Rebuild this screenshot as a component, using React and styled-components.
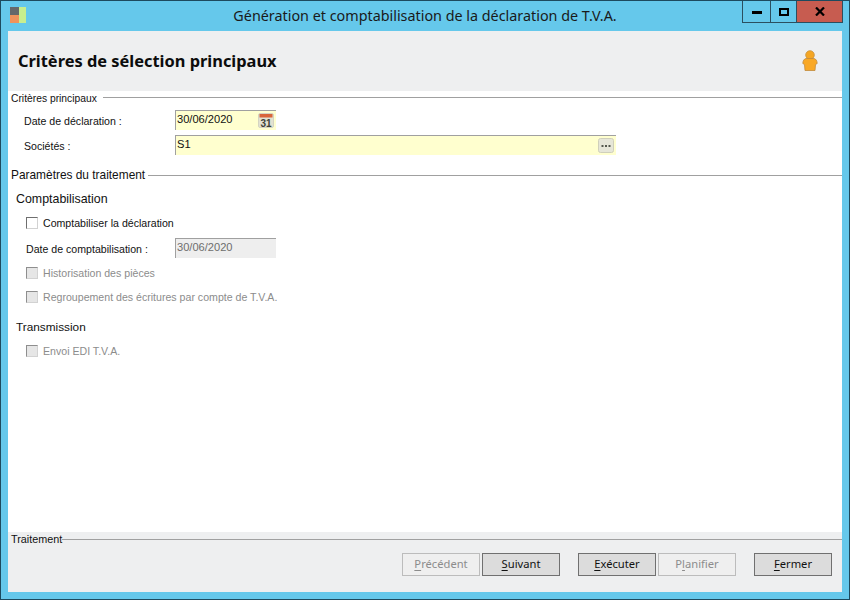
import React from 'react';
import styled, { createGlobalStyle } from 'styled-components';

const GlobalStyle = createGlobalStyle`
  html, body {
    margin: 0;
    padding: 0;
    background: #65c8eb;
  }
`;

const Frame = styled.div`
  box-sizing: border-box;
  width: 850px;
  height: 600px;
  display: flex;
  flex-direction: column;
  background-color: #65c8eb;
  border: 1px solid #1d4a5e;
  padding: 0 7px 7px 7px;
  font-family: 'Liberation Sans', Arial, sans-serif;
  font-size: 10.6px;
  color: #111;
  overflow: hidden;
`;

const TitleBar = styled.div`
  height: 30px;
  flex: none;
  position: relative;
  display: flex;
  align-items: center;
  justify-content: center;
`;

const TitleText = styled.div`
  font-family: 'Noto Sans', sans-serif;
  font-size: 14.35px;
  color: #1a1a1a;
  margin-top: -1px;
`;

const AppIcon = styled.svg`
  position: absolute;
  left: 2px;
  top: 6px;
`;

const WindowButtons = styled.div`
  position: absolute;
  top: -1px;
  right: -1px;
  height: 21px;
  display: flex;
  border: 1px solid #2b4f60;
`;

const WindowButton = styled.div`
  width: ${(props) => props.$width}px;
  display: flex;
  align-items: center;
  justify-content: center;
  background-color: ${(props) => (props.$close ? '#c75c50' : 'transparent')};
  border-left: ${(props) => (props.$first ? 'none' : '1px solid #2b4f60')};
`;

const Client = styled.div`
  flex: 1;
  display: flex;
  flex-direction: column;
  background-color: #fff;
  min-height: 0;
`;

const Header = styled.div`
  box-sizing: border-box;
  height: 60px;
  flex: none;
  display: flex;
  align-items: center;
  justify-content: space-between;
  padding: 0 23px 0 10px;
  background-color: #eeeff0;
`;

const HeaderTitle = styled.div`
  font-family: 'Noto Sans', sans-serif;
  font-size: 16.4px;
  font-weight: 700;
  color: #0c0c0c;
  padding-bottom: 2px;
`;

const Content = styled.div`
  flex: 1;
  padding-left: 3px;
`;

const Legend = styled.div`
  display: flex;
  align-items: center;
  gap: ${(props) => props.$gap}px;
  height: 14px;
  font-size: ${(props) => props.$size}px;
  margin-top: ${(props) => props.$top || 0}px;

  &::after {
    content: '';
    flex: 1;
    height: 1px;
    background-color: #a0a0a0;
    margin-top: ${(props) => props.$lineOffset || 0}px;
  }
`;

const FormRow = styled.div`
  display: flex;
  align-items: center;
  height: 20px;
  margin-top: ${(props) => props.$top || 0}px;
  padding-left: ${(props) => props.$left}px;
`;

const FieldLabel = styled.div`
  width: ${(props) => 164 - props.$left}px;
  flex: none;
  padding-top: 2px;
`;

const Field = styled.div`
  box-sizing: border-box;
  position: relative;
  width: ${(props) => props.$width}px;
  height: 20px;
  display: flex;
  align-items: flex-start;
  padding: 2px 0 0 1px;
  font-size: 11.1px;
  background-color: ${(props) => (props.$disabled ? '#eeeeee' : '#ffffcf')};
  border-top: 1px solid #a0a0a0;
  border-left: 1px solid #a0a0a0;
  color: ${(props) => (props.$disabled ? '#6d6d6d' : '#111')};
`;

const FieldIcon = styled.svg`
  position: absolute;
  right: 2px;
  top: 2px;
`;

const SubHeading = styled.div`
  height: 16px;
  line-height: 16px;
  padding-left: 5px;
  font-size: ${(props) => props.$size}px;
  margin-top: ${(props) => props.$top}px;
  color: #111;
`;

const CheckRow = styled.div`
  display: flex;
  align-items: center;
  height: 16px;
  gap: 5px;
  padding-left: 15px;
  margin-top: ${(props) => props.$top}px;
  color: ${(props) => (props.$disabled ? '#8c8c8c' : '#111')};
`;

const CheckBox = styled.div`
  box-sizing: border-box;
  width: 12px;
  height: 12px;
  flex: none;
  background-color: ${(props) => (props.$disabled ? '#e6e6e6' : '#fff')};
  border: 1px solid;
  border-color: ${(props) => (props.$disabled ? '#8e8e8e' : '#6e6e6e')} #d2d2d2 #d2d2d2
    ${(props) => (props.$disabled ? '#8e8e8e' : '#6e6e6e')};
`;

const Footer = styled.div`
  height: 60px;
  flex: none;
  padding-left: 3px;
  display: flex;
  flex-direction: column;
  background-color: #eeeff0;
`;

const ButtonBar = styled.div`
  display: flex;
  justify-content: flex-end;
  margin-top: 7px;
  padding-right: 10px;
`;

const ActionButton = styled.div`
  box-sizing: border-box;
  width: 78px;
  height: 23px;
  display: flex;
  align-items: center;
  justify-content: center;
  padding-bottom: 2px;
  font-family: 'Noto Sans', sans-serif;
  font-size: 11.2px;
  margin-left: ${(props) => props.$gap}px;
  background-color: ${(props) => (props.$disabled ? '#efefef' : '#dcdcdc')};
  border: 1px solid ${(props) => (props.$disabled ? '#bcbcbc' : '#707070')};
  color: ${(props) => (props.$disabled ? '#8c8c8c' : '#111')};

  u {
    text-underline-offset: 2px;
  }
`;

const UserIcon = () => (
  <svg width="18" height="22" viewBox="0 0 18 22">
    <circle cx="9" cy="5" r="4.3" fill="#f5a623" stroke="#c8913c" strokeWidth="0.8" />
    <path
      d="M5 8.5 C3 9 2 10.5 1.8 13.5 L3.5 14.5 L4 20.5 H14 L14.5 14.5 L16.2 13.5 C16 10.5 15 9 13 8.5 Z"
      fill="#f9a825"
      stroke="#c08a3e"
      strokeWidth="0.8"
    />
  </svg>
);

const App = () => (
  <>
    <GlobalStyle />
    <Frame>
      <TitleBar>
        <AppIcon width="18" height="17" viewBox="0 0 18 17">
          <rect x="0" y="0" width="9" height="8" fill="#66686a" />
          <rect x="0" y="8" width="9" height="8" fill="#f0935c" />
          <rect x="9" y="0" width="7" height="16" fill="#c8ee8e" />
        </AppIcon>
        <TitleText>Génération et comptabilisation de la déclaration de T.V.A.</TitleText>
        <WindowButtons>
          <WindowButton $first $width={27}>
            <svg width="10" height="4" viewBox="0 0 10 4">
              <rect width="10" height="3" y="1" fill="#000" />
            </svg>
          </WindowButton>
          <WindowButton $width={25}>
            <svg width="10" height="8" viewBox="0 0 10 8">
              <rect x="1" y="1" width="8" height="6" fill="none" stroke="#000" strokeWidth="2" />
            </svg>
          </WindowButton>
          <WindowButton $close $width={45}>
            <svg width="10" height="9" viewBox="0 0 10 9">
              <path d="M1 0.5 L9 8.5 M9 0.5 L1 8.5" stroke="#000" strokeWidth="2.2" />
            </svg>
          </WindowButton>
        </WindowButtons>
      </TitleBar>
      <Client>
        <Header>
          <HeaderTitle>Critères de sélection principaux</HeaderTitle>
          <UserIcon />
        </Header>
        <Content>
          <Legend $lineOffset={-2} $gap={6} $size={10.3}>Critères principaux</Legend>
          <FormRow $left={13} $top={5}>
            <FieldLabel $left={13}>Date de déclaration :</FieldLabel>
            <Field $width={101}>
              30/06/2020
              <FieldIcon width="16" height="15" viewBox="0 0 16 15">
                <rect x="0.5" y="0.5" width="15" height="14" rx="1.5" fill="#e2e2d2" stroke="#d4d4c2" />
                <rect x="1.5" y="1" width="13" height="3.5" fill="#d9653a" />
                <text x="8" y="13.5" textAnchor="middle" fontSize="10" fontWeight="700" fontFamily="Liberation Sans" fill="#3f4238">31</text>
              </FieldIcon>
            </Field>
          </FormRow>
          <FormRow $left={13} $top={5}>
            <FieldLabel $left={13}>Sociétés :</FieldLabel>
            <Field $width={441}>
              S1
              <FieldIcon width="16" height="15" viewBox="0 0 16 15">
                <rect x="0.5" y="0.5" width="15" height="14" rx="2" fill="#e6e6d8" stroke="#cfcfbb" />
                <rect x="3.5" y="7" width="2" height="2" fill="#55584e" />
                <rect x="7" y="7" width="2" height="2" fill="#55584e" />
                <rect x="10.5" y="7" width="2" height="2" fill="#55584e" />
              </FieldIcon>
            </Field>
          </FormRow>
          <Legend $top={13} $gap={3} $size={11.9}>Paramètres du traitement</Legend>
          <SubHeading $top={9} $size={12.4}>Comptabilisation</SubHeading>
          <CheckRow $top={8}>
            <CheckBox />
            Comptabiliser la déclaration
          </CheckRow>
          <FormRow $left={15} $top={7}>
            <FieldLabel $left={15}>Date de comptabilisation :</FieldLabel>
            <Field $width={101} $disabled>30/06/2020</Field>
          </FormRow>
          <CheckRow $top={7} $disabled>
            <CheckBox $disabled />
            Historisation des pièces
          </CheckRow>
          <CheckRow $top={8} $disabled>
            <CheckBox $disabled />
            Regroupement des écritures par compte de T.V.A.
          </CheckRow>
          <SubHeading $top={14} $size={11.8}>Transmission</SubHeading>
          <CheckRow $top={8} $disabled>
            <CheckBox $disabled />
            Envoi EDI T.V.A.
          </CheckRow>
        </Content>
        <Footer>
          <Legend $gap={0} $size={10.8}>Traitement</Legend>
          <ButtonBar>
            <ActionButton $disabled $gap={0}><span><u>P</u>récédent</span></ActionButton>
            <ActionButton $gap={2}><span><u>S</u>uivant</span></ActionButton>
            <ActionButton $gap={18}><span><u>E</u>xécuter</span></ActionButton>
            <ActionButton $disabled $gap={2}><span>P<u>l</u>anifier</span></ActionButton>
            <ActionButton $gap={18}><span><u>F</u>ermer</span></ActionButton>
          </ButtonBar>
        </Footer>
      </Client>
    </Frame>
  </>
);

export default App;
